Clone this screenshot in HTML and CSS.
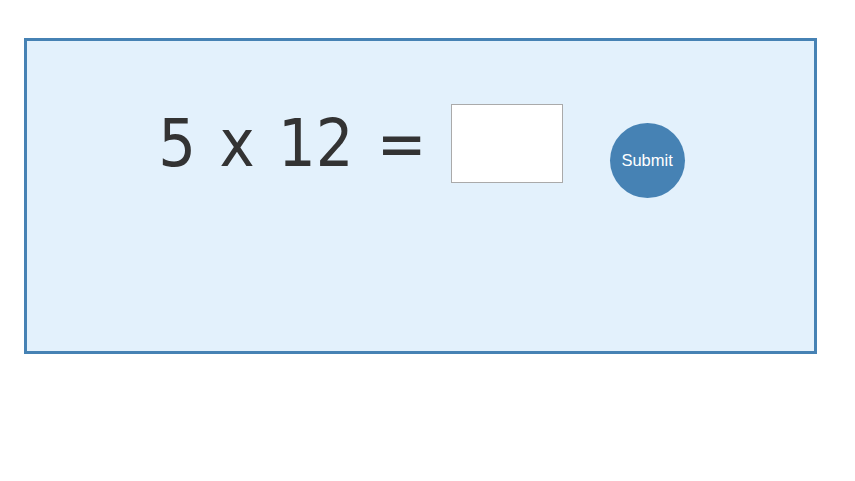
FILE: index.html
```html
<!DOCTYPE html>
<html>
<head>
<meta charset="utf-8">
<link rel="stylesheet" href="styles.css">
</head>
<body>
<div class="card">
  <div class="row">
    <span class="question">5 x 12 =</span>
    <input class="answer" type="text">
    <button class="submit">Submit</button>
  </div>
</div>
</body>
</html>
```
FILE: styles.css
```css
body {
  margin: 8px;
  background: #fff;
}
.card {
  margin: 30px 30px 0 16px;
  height: 310px;
  border: 3px solid #4682b4;
  background: #e3f1fc;
  box-sizing: content-box;
}
.row {
  display: flex;
  justify-content: center;
  align-items: flex-start;
  padding-top: 63px;
}
.question {
  font-family: "DejaVu Sans Condensed", "DejaVu Sans", Verdana, sans-serif;
  font-size: 66px;
  line-height: 80px;
  word-spacing: 4.5px;
  color: #333;
  margin: 0 24px 0 2px;
}
.answer {
  width: 112px;
  height: 79px;
  box-sizing: border-box;
  border: 1px solid #aaa;
  background: #fff;
  padding: 0;
  margin: 0;
  outline: none;
}
.submit {
  margin: 19px 0 0 47px;
  width: 75px;
  height: 75px;
  border-radius: 50%;
  border: none;
  padding: 0;
  background: #4682b4;
  color: #fff;
  font-family: "Liberation Sans", Arial, sans-serif;
  font-size: 16.5px;
}
```
